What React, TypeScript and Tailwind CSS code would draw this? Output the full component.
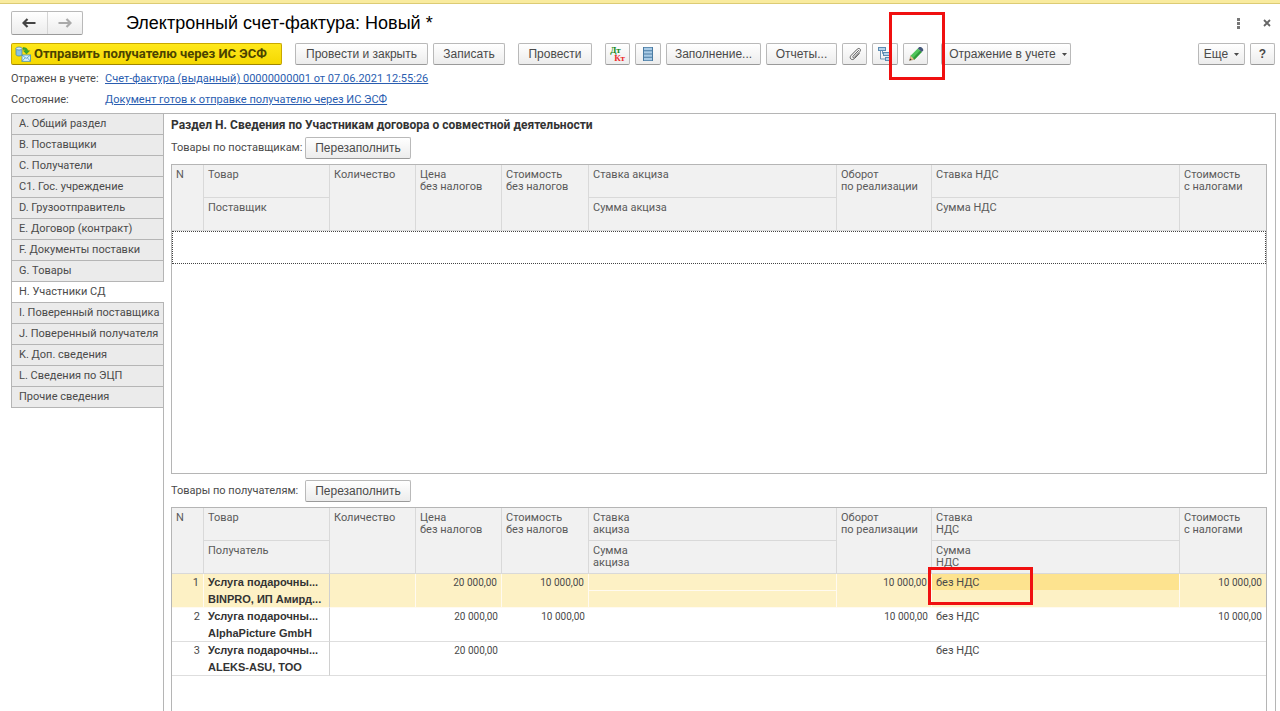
import { useState } from 'react';
import type { ReactNode } from 'react';
import clsx from 'clsx';

const tabs = [
  'A. Общий раздел',
  'B. Поставщики',
  'C. Получатели',
  'C1. Гос. учреждение',
  'D. Грузоотправитель',
  'E. Договор (контракт)',
  'F. Документы поставки',
  'G. Товары',
  'H. Участники СД',
  'I. Поверенный поставщика',
  'J. Поверенный получателя',
  'K. Доп. сведения',
  'L. Сведения по ЭЦП',
  'Прочие сведения',
];

const recipients = [
  { n: 1, product: 'Услуга подарочны...', recipient: 'BINPRO, ИП Амирд...', price: '20 000,00', cost: '10 000,00', turnover: '10 000,00', vat: 'без НДС', total: '10 000,00' },
  { n: 2, product: 'Услуга подарочны...', recipient: 'AlphaPicture GmbH', price: '20 000,00', cost: '10 000,00', turnover: '10 000,00', vat: 'без НДС', total: '10 000,00' },
  { n: 3, product: 'Услуга подарочны...', recipient: 'ALEKS-ASU, ТОО', price: '20 000,00', cost: '', turnover: '', vat: 'без НДС', total: '' },
];

function ToolButton({ children, className, label }: { children: ReactNode; className?: string; label?: string }) {
  return (
    <button
      type="button"
      aria-label={label}
      className={clsx(
        "relative flex h-[22px] shrink-0 items-center justify-center whitespace-nowrap rounded-xs border border-[#b9b9b9] border-b-[#9a9a9a] bg-linear-to-b from-white to-[#ececec] font-['Liberation_Sans',Arial,sans-serif] text-xs text-[#4a4a4a]",
        className
      )}
    >
      {children}
    </button>
  );
}

function Caret() {
  return (
    <svg width="5" height="3" viewBox="0 0 5 3" className="ml-1.5" aria-hidden="true">
      <path d="M0 0h5L2.5 3z" fill="#4a4a4a" />
    </svg>
  );
}

function ArrowIcon({ flip, color }: { flip?: boolean; color: string }) {
  return (
    <svg width="14" height="10" viewBox="0 0 14 10" className={clsx(flip && 'rotate-180')} aria-hidden="true">
      <path d="M5.500 1L1.500 5l4 4M2 5h11.500" fill="none" stroke={color} strokeWidth="2.200" />
    </svg>
  );
}

function SendIcon() {
  return (
    <svg width="16" height="16" viewBox="0 0 16 16" aria-hidden="true">
      <path d="M1 2.500v6C1 9.400 2.300 10 4 10s3-.6 3-1.500v-6z" fill="#8cc4e6" stroke="#3f7fa8" strokeWidth=".7" />
      <ellipse cx="4" cy="2.500" rx="3" ry="1.500" fill="#d4edfa" stroke="#3f7fa8" strokeWidth=".7" />
      <path d="M8 1.500c3 0 4.600 1 4.600 3.200h2L11.500 8 8.400 4.700h2C10.400 3.900 9.800 3.500 8 3.500z" fill="#3aa935" stroke="#1f7a1c" strokeWidth=".4" />
      <rect x="7" y="9" width="8.500" height="6.300" fill="#d8effb" stroke="#3f8fc0" strokeWidth=".8" />
      <path d="M7 9l4.250 3.500L15.500 9M7 15.300l3.200-3.500M15.500 15.300l-3.200-3.500" fill="none" stroke="#3f8fc0" strokeWidth=".7" />
    </svg>
  );
}

function DtKtIcon() {
  return (
    <span className="flex flex-col font-['Liberation_Serif',serif] text-[9px] font-bold leading-2" aria-hidden="true">
      <span className="pr-1 text-[#168a1e]">Дт</span>
      <span className="pl-1 text-[#ee2b2b]">Кт</span>
    </span>
  );
}

function ListIcon() {
  return (
    <svg width="12" height="14" viewBox="0 0 12 14" aria-hidden="true">
      <rect x="1" y="0" width="10" height="14" fill="#4a7ba3" />
      <path d="M2 2h8M2 5.300h8M2 8.700h8M2 12h8" stroke="#a9cbe6" strokeWidth="2.300" />
    </svg>
  );
}

function ClipIcon() {
  return (
    <svg width="16" height="16" viewBox="0 0 16 16" aria-hidden="true">
      <path
        d="M11.500 4.500L6 10.300c-.8.800.3 2 1.200 1.200l5.600-5.900c1.800-2-.6-4.300-2.500-2.500L4 9.500c-2.300 2.500.8 5.600 3.300 3.200l5-5.200"
        fill="none"
        stroke="#5a5a5a"
        strokeWidth="1"
        strokeLinecap="round"
      />
    </svg>
  );
}

function StructureIcon() {
  return (
    <svg width="16" height="16" viewBox="0 0 16 16" aria-hidden="true">
      <path d="M3.500 4v9h6M5.500 4.500v3h2" fill="none" stroke="#6a93b5" strokeWidth="1" />
      <rect x="1.500" y="1.500" width="7" height="3" fill="#b5d3ea" stroke="#5b8bb2" />
      <rect x="6.500" y="6.500" width="7" height="3" fill="#b5d3ea" stroke="#5b8bb2" />
      <rect x="8.500" y="11.500" width="6" height="3" fill="#b5d3ea" stroke="#5b8bb2" />
    </svg>
  );
}

function PencilIcon() {
  return (
    <svg width="16" height="16" viewBox="0 0 16 16" aria-hidden="true">
      <path d="M1.500 14.500l1.300-5 4.200 3.700z" fill="#e9c18c" stroke="#8a6a3c" strokeWidth=".4" />
      <path d="M1.500 14.500l.6-2.100 1.600 1.400z" fill="#333" />
      <path d="M2.600 9.700l7.200-7.300 4 3.700-7.200 7.400z" fill="#4fc45a" />
      <path d="M5 11.900l7.200-7.400 1.600 1.600-7.200 7.400z" fill="#2f9a39" />
      <path d="M9.800 2.400l1.400-1.300c1.800-1 4.600 1.600 4 3.500l-1.400 1.500z" fill="#44577a" />
    </svg>
  );
}

function Columns() {
  return (
    <colgroup>
      <col className="w-8" />
      <col className="w-[126px]" />
      <col className="w-[86px]" />
      <col className="w-[86px]" />
      <col className="w-[87px]" />
      <col />
      <col className="w-[95px]" />
      <col />
      <col className="w-[86px]" />
    </colgroup>
  );
}

function Th({ children, last, rowSpan }: { children: ReactNode; last?: boolean; rowSpan?: number }) {
  return (
    <th
      rowSpan={rowSpan}
      className={clsx('border-b border-[#d9d9d9] px-1 pt-1 text-left align-top font-normal leading-3', !last && 'border-r')}
    >
      {children}
    </th>
  );
}

function TableHead({ party, excise, exciseSum, vat, vatSum }: Record<string, ReactNode>) {
  return (
    <thead className="bg-[#f1f1f1] text-[#5a5a5a]">
      <tr className="h-[33px]">
        <Th rowSpan={2}>N</Th>
        <Th>Товар</Th>
        <Th rowSpan={2}>Количество</Th>
        <Th rowSpan={2}>Цена<br />без налогов</Th>
        <Th rowSpan={2}>Стоимость<br />без налогов</Th>
        <Th>{excise}</Th>
        <Th rowSpan={2}>Оборот<br />по реализации</Th>
        <Th>{vat}</Th>
        <Th rowSpan={2} last>Стоимость<br />с налогами</Th>
      </tr>
      <tr className="h-[33px]">
        <Th>{party}</Th>
        <Th>{exciseSum}</Th>
        <Th>{vatSum}</Th>
      </tr>
    </thead>
  );
}

export default function App() {
  const [activeTab, setActiveTab] = useState(8);
  const [selectedRow, setSelectedRow] = useState(1);

  return (
    <div className="flex min-h-screen flex-col bg-white font-[Roboto,Arial,sans-serif] text-[11px] text-[#4a4a4a]">
      <div className="h-1 border-b border-[#dccb74] bg-[#f9eb9f]" />

      <header className="flex items-center pl-[11px] pr-[7px] pt-[7px]">
        <div className="flex h-6 w-[72px] rounded-xs border border-[#b9b9b9] border-b-[#9a9a9a] bg-linear-to-b from-white to-[#ececec]">
          <button type="button" aria-label="Назад" className="flex flex-1 items-center justify-center border-r border-[#d5d5d5]">
            <ArrowIcon color="#444" />
          </button>
          <button type="button" aria-label="Вперед" className="flex flex-1 items-center justify-center">
            <ArrowIcon flip color="#aaa" />
          </button>
        </div>
        <h1 className="ml-[43px] flex-1 font-['Liberation_Sans',Arial,sans-serif] text-lg leading-6 text-black">
          Электронный счет-фактура: Новый *
        </h1>
        <button type="button" aria-label="Меню" className="mr-[17px] flex h-4 w-3 items-center justify-center">
          <svg width="3" height="11" viewBox="0 0 3 11" fill="#777" aria-hidden="true">
            <path d="M0 0h3v3H0zM0 4h3v3H0zM0 8h3v3H0z" />
          </svg>
        </button>
        <button type="button" aria-label="Закрыть" className="flex h-4 w-3 items-center justify-center">
          <svg width="8" height="8" viewBox="0 0 8 8" aria-hidden="true">
            <path d="M1 1l6 6M7 1L1 7" stroke="#666" strokeWidth="1.800" />
          </svg>
        </button>
      </header>

      <div className="flex gap-[5px] pl-[11px] pr-[5px] pt-2">
        <button
          type="button"
          className="mr-2 flex h-[22px] w-[271px] shrink-0 items-center gap-[3px] whitespace-nowrap rounded-xs border border-[#c9a800] border-b-[#a08600] bg-linear-to-b from-[#ffe81a] to-[#f5d800] pl-[3px] text-[13px] font-bold text-[#4b4300]"
        >
          <SendIcon />
          Отправить получателю через ИС ЭСФ
        </button>
        <ToolButton className="w-[133px]">Провести и закрыть</ToolButton>
        <ToolButton className="mr-2 w-[72px]">Записать</ToolButton>
        <ToolButton className="mr-2 w-[74px]">Провести</ToolButton>
        <ToolButton className="w-[25px]" label="Дт/Кт"><DtKtIcon /></ToolButton>
        <ToolButton className="w-[26px]" label="Движения документа"><ListIcon /></ToolButton>
        <ToolButton className="w-[95px]">Заполнение...</ToolButton>
        <ToolButton className="w-[71px]">Отчеты...</ToolButton>
        <ToolButton className="w-[25px]" label="Присоединенные файлы"><ClipIcon /></ToolButton>
        <ToolButton className="w-[26px]" label="Структура подчиненности"><StructureIcon /></ToolButton>
        <ToolButton className="z-10 mr-2 w-[25px]" label="Редактировать">
          <PencilIcon />
          <span className="pointer-events-none absolute -left-[15px] -top-8 h-[68px] w-14 border-3 border-[#f01010]" />
        </ToolButton>
        <ToolButton className="w-[130px] pl-1">Отражение в учете<Caret /></ToolButton>
        <ToolButton className="ml-auto w-[47px]">Еще<Caret /></ToolButton>
        <ToolButton className="w-[25px] font-bold" label="Справка">?</ToolButton>
      </div>

      <dl className="grid grid-cols-[94px_1fr] py-[3px] pl-[11px] leading-[21px]">
        <dt>Отражен в учете:</dt>
        <dd><a href="#invoice" className="text-[#2a5db0] underline">Счет-фактура (выданный) 00000000001 от 07.06.2021 12:55:26</a></dd>
        <dt>Состояние:</dt>
        <dd><a href="#status" className="text-[#2a5db0] underline">Документ готов к отправке получателю через ИС ЭСФ</a></dd>
      </dl>

      <div className="flex flex-1 pl-[11px] pr-1">
        <nav className="flex w-[153px] shrink-0 flex-col">
          {tabs.map((tab, i) => (
            <button
              key={tab}
              type="button"
              onClick={() => setActiveTab(i)}
              className={clsx(
                'h-[21px] whitespace-nowrap border-l border-t border-[#b5b5b5] pl-[7px] text-left',
                i === activeTab ? 'bg-white' : 'border-r bg-[#ebebeb]'
              )}
            >
              {tab}
            </button>
          ))}
          <div className="flex flex-1 border-r border-t border-[#b5b5b5]" />
        </nav>

        <main className="flex min-w-0 flex-1 flex-col border-r border-t border-[#b5b5b5] pl-[7px] pr-2">
          <h2 className="pt-[3px] text-xs font-bold leading-4 text-[#333]">
            Раздел H. Сведения по Участникам договора о совместной деятельности
          </h2>

          <div className="flex items-center pb-[5px] pt-1">
            <span className="w-[134px] whitespace-nowrap">Товары по поставщикам:</span>
            <ToolButton className="w-[106px]">Перезаполнить</ToolButton>
          </div>
          <div className="h-[310px] shrink-0 border border-[#b5b5b5]">
            <table className="w-full table-fixed border-separate border-spacing-0">
              <Columns />
              <TableHead party="Поставщик" excise="Ставка акциза" exciseSum="Сумма акциза" vat="Ставка НДС" vatSum="Сумма НДС" />
              <tbody>
                <tr className="h-[33px]">
                  <td colSpan={9} className="border border-dotted border-[#444]" />
                </tr>
              </tbody>
            </table>
          </div>

          <div className="flex items-center pb-[5px] pt-[6px]">
            <span className="w-[134px] whitespace-nowrap">Товары по получателям:</span>
            <ToolButton className="w-[106px]">Перезаполнить</ToolButton>
          </div>
          <div className="flex-1 border border-b-0 border-[#b5b5b5]">
            <table className="w-full table-fixed border-separate border-spacing-0">
              <Columns />
              <TableHead
                party="Получатель"
                excise={<>Ставка<br />акциза</>}
                exciseSum={<>Сумма<br />акциза</>}
                vat={<>Ставка<br />НДС</>}
                vatSum={<>Сумма<br />НДС</>}
              />
              <tbody>
                {recipients.map((row) => {
                  const selected = row.n === selectedRow;
                  const cell = clsx('border-b p-0 px-1 align-top', selected ? 'border-r border-[#fffaf0] last:border-r-0' : 'border-[#dedede]');
                  const numeric = clsx(cell, 'text-right text-[10px]');
                  return (
                    <tr
                      key={row.n}
                      onClick={() => setSelectedRow(row.n)}
                      className={clsx('h-[34px] leading-[17px]', selected && 'bg-[#fdf1c5]')}
                    >
                      <td className={clsx(cell, 'text-right')}>{row.n}</td>
                      <td className={clsx(cell, "whitespace-nowrap border-r border-r-[#d0d0d0] font-['Liberation_Sans',Arial,sans-serif] font-bold text-[#333]")}>
                        <div>{row.product}</div>
                        <div className="-mb-px">{row.recipient}</div>
                      </td>
                      <td className={cell} />
                      <td className={numeric}>{row.price}</td>
                      <td className={numeric}>{row.cost}</td>
                      <td className={cell}>
                        {selected && <div className="-mx-1 h-[17px] border-b border-[#fffaf0]" />}
                      </td>
                      <td className={numeric}>{row.turnover}</td>
                      <td className={cell}>
                        <div className={clsx('relative -mx-1 h-4 px-1', selected && 'bg-[#fde38f]')}>
                          {row.vat}
                          {row.n === 1 && (
                            <span className="pointer-events-none absolute -left-1 -top-[7px] h-[38px] w-[105px] border-3 border-[#f01010]" />
                          )}
                        </div>
                      </td>
                      <td className={numeric}>{row.total}</td>
                    </tr>
                  );
                })}
              </tbody>
            </table>
          </div>
        </main>
      </div>
    </div>
  );
}
